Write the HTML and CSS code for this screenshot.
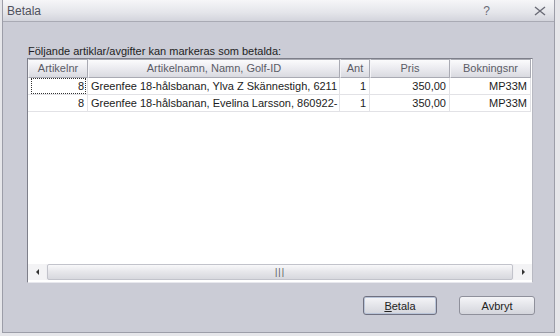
FILE: index.html
```html
<!DOCTYPE html>
<html lang="sv">
<head>
    <meta charset="UTF-8">
    <title>Betala</title>
    <link rel="stylesheet" href="styles.css">
</head>
<body>

    <div class="window">
        <div class="titlebar">
            <span class="title">Betala</span>
            <span class="help">?</span>
            <svg class="close" width="12" height="10" viewBox="0 0 12 10">
                <path d="M1 1 L11 9 M11 1 L1 9" stroke="#6a6b76" stroke-width="1.4" fill="none"/>
            </svg>
        </div>

        <div class="content">
            <div class="label">Följande artiklar/avgifter kan markeras som betalda:</div>

            <div class="listbox">
                <div class="row header">
                    <div class="cell c1">Artikelnr</div>
                    <div class="cell c2">Artikelnamn, Namn, Golf-ID</div>
                    <div class="cell c3">Ant</div>
                    <div class="cell c4">Pris</div>
                    <div class="cell c5">Bokningsnr</div>
                </div>
                <div class="row item">
                    <div class="cell c1 num"><span class="focus">8</span></div>
                    <div class="cell c2">Greenfee 18-hålsbanan, Ylva Z Skännestigh, 6211</div>
                    <div class="cell c3 num">1</div>
                    <div class="cell c4 num">350,00</div>
                    <div class="cell c5 num">MP33M</div>
                </div>
                <div class="row item">
                    <div class="cell c1 num">8</div>
                    <div class="cell c2">Greenfee 18-hålsbanan, Evelina Larsson, 860922-</div>
                    <div class="cell c3 num">1</div>
                    <div class="cell c4 num">350,00</div>
                    <div class="cell c5 num">MP33M</div>
                </div>
                <div class="spacer"></div>
                <div class="hscroll">
                    <div class="arrow"><span class="tri left"></span></div>
                    <div class="thumb"><span class="grip">|||</span></div>
                    <div class="arrow"><span class="tri right"></span></div>
                </div>
            </div>

            <div class="buttons">
                <button class="btn default"><u>B</u>etala</button>
                <button class="btn">Avbryt</button>
            </div>
        </div>
    </div>

</body>
</html>
```

FILE: styles.css
```css
body {
    margin: 0;
    background: #e6e6ea;
    font-family: "Liberation Sans", Arial, sans-serif;
    font-size: 11px;
    color: #222;
}
.window {
    width: 553px;
    height: 333px;
    margin-left: 2px;
    box-sizing: border-box;
    border: 1px solid #9c9da8;
    border-top: none;
    background: #cbccd6;
    display: flex;
    flex-direction: column;
}
.titlebar {
    height: 22px;
    flex: none;
    display: flex;
    align-items: center;
    padding: 0 8px 0 4px;
    background: linear-gradient(#f6f6f8, #e4e5ea 60%, #d3d4dc);
    border-bottom: 1px solid #a9aab4;
    box-sizing: border-box;
}
.title {
    flex: 1;
    font-size: 12px;
    color: #50515c;
}
.help {
    font-size: 12px;
    color: #6a6b76;
    margin-right: 44px;
}
.close {
    display: block;
}
.content {
    padding: 23px 0 0 24px;
}
.label {
    height: 13px;
    line-height: 13px;
    padding-left: 1px;
    color: #1e1e24;
}
.listbox {
    width: 506px;
    height: 225px;
    box-sizing: border-box;
    border: 1px solid #7e7f8a;
    border-right-color: #b8b9c2;
    border-bottom-color: #e8e8ee;
    background: #fff;
    display: flex;
    flex-direction: column;
    padding-bottom: 2px;
}
.row {
    display: flex;
    flex: none;
}
.cell {
    box-sizing: border-box;
    white-space: nowrap;
    overflow: hidden;
    padding: 0 3px;
}
.c1 { width: 60px; }
.c2 { width: 252px; }
.c3 { width: 30px; }
.c4 { width: 80px; }
.c5 { width: 81px; }
.header {
    height: 19px;
    line-height: 17px;
}
.header .cell {
    text-align: center;
    color: #5b5c66;
    background: linear-gradient(#fbfbfc, #e9e9ee 55%, #d9dae0);
    border: 1px solid #a9aab3;
    border-left-color: #f4f4f7;
    border-radius: 1px;
}
.item {
    height: 17px;
    line-height: 16px;
}
.item .cell {
    border-right: 1px solid #e2e2e6;
    border-bottom: 1px solid #e2e2e6;
    color: #1c1c22;
}
.num {
    text-align: right;
}
.focus {
    display: block;
    margin: 0 -2px 0 0;
    border: 1px dotted #333;
    line-height: 14px;
    padding-right: 1px;
}
.item .c1 {
    padding-left: 3px;
}
.spacer {
    flex: 1;
}
.hscroll {
    height: 16px;
    display: flex;
    flex: none;
    background: #f0f0f3;
}
.arrow {
    width: 18px;
    display: flex;
    align-items: center;
    justify-content: center;
    background: #f3f3f5;
}
.tri {
    width: 0;
    height: 0;
    border-top: 3px solid transparent;
    border-bottom: 3px solid transparent;
}
.tri.left { border-right: 3px solid #333; }
.tri.right { border-left: 3px solid #333; }
.thumb {
    flex: 1;
    margin: 0 1px;
    border: 1px solid #c2c3cb;
    border-radius: 2px;
    background: linear-gradient(#f8f8fa, #e6e6ea 50%, #d7d8de);
    display: flex;
    align-items: center;
    justify-content: center;
}
.grip {
    font-size: 9px;
    line-height: 9px;
    color: #555;
    letter-spacing: 1px;
}
.buttons {
    display: flex;
    gap: 22px;
    margin-top: 13px;
    padding-left: 336px;
}
.btn {
    font-family: "Liberation Sans", Arial, sans-serif;
    font-size: 11px;
    color: #222;
    height: 19px;
    padding: 0;
    border: 1px solid #8f909b;
    border-radius: 3px;
    background: linear-gradient(#f5f5f8, #e4e5ea 50%, #d4d5dc);
}
.btn.default {
    width: 74px;
    box-shadow: inset 0 0 0 1px #b9c4d8;
    border-color: #6f7080;
}
.btn:not(.default) {
    width: 76px;
}
```
